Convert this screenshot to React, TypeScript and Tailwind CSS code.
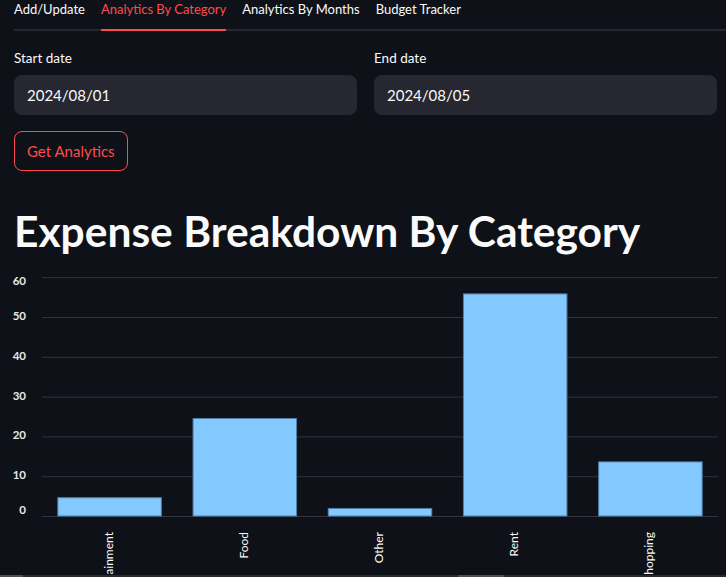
import { useState } from 'react'

const tabs = ['Add/Update', 'Analytics By Category', 'Analytics By Months', 'Budget Tracker']

const data = [
  { category: 'Entertainment', total: 4.6 },
  { category: 'Food', total: 24.5 },
  { category: 'Other', total: 1.9 },
  { category: 'Rent', total: 55.8 },
  { category: 'Shopping', total: 13.6 },
]

// chart geometry, in page coordinates (svg viewBox is offset to match)
const X0 = 42
const X1 = 718
const Y_ZERO = 517
const PX_PER_UNIT = 3.98
const STEP = (X1 - X0) / data.length
const BAR_W = 103.5

function yFor(v: number) {
  return Y_ZERO - v * PX_PER_UNIT
}

function CategoryChart() {
  const ticks = [0, 10, 20, 30, 40, 50, 60]
  return (
    <svg className="block w-full h-[319px]" viewBox="0 256 726 319" preserveAspectRatio="none">
      {ticks.map((t) => {
        const y = yFor(t)
        const ly = t === 60 ? y + 5 : t === 0 ? y - 4.5 : y
        return (
          <g key={t}>
            <line x1={X0} x2={X1} y1={y + 0.5} y2={y + 0.5} stroke="#31333f" strokeWidth="1" />
            <text
              x={26}
              y={ly}
              textAnchor="end"
              dominantBaseline="middle"
              fill="#e6e8ec"
              fontSize="11.5"
              fontWeight="700"
              fontFamily="Lato, 'Noto Sans', sans-serif"
            >
              {t}
            </text>
          </g>
        )
      })}
      {data.map((d, i) => {
        const cx = X0 + STEP * i + STEP / 2
        const top = yFor(d.total)
        return (
          <g key={d.category}>
            <rect
              x={cx - BAR_W / 2}
              y={top}
              width={BAR_W}
              height={Y_ZERO - top}
              fill="#83c9ff"
              stroke="#4f7ea6"
              strokeWidth="1"
            />
            <text
              transform={`translate(${cx}, 533) rotate(-90)`}
              textAnchor="end"
              dominantBaseline="middle"
              fill="#fafafa"
              fontSize="12"
              fontFamily="Lato, 'Noto Sans', sans-serif"
            >
              {d.category}
            </text>
          </g>
        )
      })}
    </svg>
  )
}

export default function App() {
  const [active, setActive] = useState(1)

  return (
    <div
      className="w-[726px] h-[577px] overflow-hidden bg-[#0e1117] text-[#fafafa] flex flex-col"
      style={{ fontFamily: "Lato, 'Noto Sans', sans-serif" }}
    >
      <div className="pl-[14px]">
        {/* Tabs */}
        <div className="flex gap-[16px] border-b-2 border-[#262730]">
          {tabs.map((t, i) => (
            <button
              key={t}
              onClick={() => setActive(i)}
              className={`text-[13px] leading-[18px] pb-[11px] -mb-[2px] border-b-2 ${
                i === active ? 'text-[#ff4b4b] border-[#ff4b4b]' : 'text-[#fafafa] border-transparent'
              }`}
            >
              {t}
            </button>
          ))}
        </div>

        {/* Date inputs */}
        <div className="flex gap-[17px] mt-[17px] pr-[9px]">
          <div className="flex-1 flex flex-col gap-[7px]">
            <label className="text-[13.5px] leading-[20px]">Start date</label>
            <div className="h-[40px] rounded-[8px] bg-[#262730] flex items-center px-[13px] text-[15px]">
              2024/08/01
            </div>
          </div>
          <div className="flex-1 flex flex-col gap-[7px]">
            <label className="text-[13.5px] leading-[20px]">End date</label>
            <div className="h-[40px] rounded-[8px] bg-[#262730] flex items-center px-[13px] text-[15px]">
              2024/08/05
            </div>
          </div>
        </div>

        <button className="mt-[16px] h-[40px] px-[12px] rounded-[8px] border border-[#ff4b4b] text-[#ff4b4b] text-[15px]">
          Get Analytics
        </button>

        <h1 className="mt-[36px] text-[42.5px] leading-[48px] font-bold">Expense Breakdown By Category</h1>
      </div>

      <div className="flex-1 min-h-0">
        <CategoryChart />
      </div>

      {/* horizontal scrollbar strip */}
      <div className="h-[2px] flex bg-[#262b33]">
        <div className="w-[23px] bg-[#4a4f58]" />
        <div className="w-[435px]" />
        <div className="w-[46px] bg-[#4a4f58]" />
      </div>
    </div>
  )
}
